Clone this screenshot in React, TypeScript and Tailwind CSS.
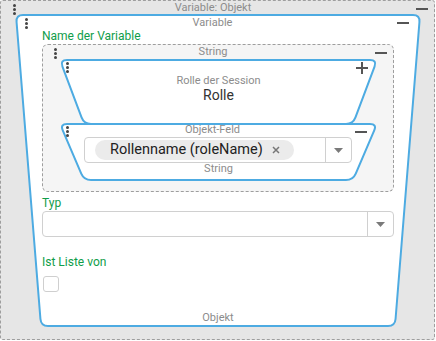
import React from "react";

const blue = "#4dabe2";

type Pt = [number, number];

// rounded polygon path, corners cut by r and bent back through the vertex
function roundedPath(pts: Pt[], r: number) {
  const n = pts.length;
  const toward = (a: Pt, b: Pt, d: number): Pt => {
    const dx = b[0] - a[0];
    const dy = b[1] - a[1];
    const len = Math.hypot(dx, dy);
    return [a[0] + (dx / len) * d, a[1] + (dy / len) * d];
  };
  let d = "";
  pts.forEach((p, i) => {
    const a = toward(p, pts[(i + n - 1) % n], r);
    const b = toward(p, pts[(i + 1) % n], r);
    d += `${i === 0 ? "M" : "L"}${a[0]},${a[1]} Q${p[0]},${p[1]} ${b[0]},${b[1]} `;
  });
  return d + "Z";
}

function Trapezoid({ w, h, inset, r = 7 }: { w: number; h: number; inset: number; r?: number }) {
  const pts: Pt[] = [
    [1, 1],
    [w - 1, 1],
    [w - 1 - inset, h - 1],
    [1 + inset, h - 1],
  ];
  return (
    <svg className="absolute left-0 top-0" width={w} height={h}>
      <path d={roundedPath(pts, r)} fill="#fff" stroke={blue} strokeWidth={2} />
    </svg>
  );
}

function Dots({ className }: { className: string }) {
  return (
    <div className={`absolute flex flex-col gap-[1px] ${className}`}>
      <span className="h-[3px] w-[3px] rounded-full bg-[#444]" />
      <span className="h-[3px] w-[3px] rounded-full bg-[#444]" />
      <span className="h-[3px] w-[3px] rounded-full bg-[#444]" />
    </div>
  );
}

function Minus({ className }: { className: string }) {
  return <span className={`absolute h-[2px] w-[12px] bg-[#555] ${className}`} />;
}

function Plus({ className }: { className: string }) {
  return (
    <div className={`absolute h-[12px] w-[12px] ${className}`}>
      <span className="absolute left-0 top-[5px] h-[2px] w-[12px] bg-[#555]" />
      <span className="absolute left-[5px] top-0 h-[12px] w-[2px] bg-[#555]" />
    </div>
  );
}

function SelectBox({ className, children }: { className: string; children?: React.ReactNode }) {
  return (
    <div className={`relative flex h-[26px] rounded-[4px] border border-[#d0d0d0] bg-white ${className}`}>
      <div className="flex flex-1 items-center">{children}</div>
      <div className="flex w-[26px] items-center justify-center border-l border-[#d0d0d0]">
        <svg width="9" height="5">
          <path d="M0 0H9L4.5 5Z" fill="#7a7a7a" />
        </svg>
      </div>
    </div>
  );
}

function ObjektFeld() {
  return (
    <div className="relative h-[58px]">
      <Trapezoid w={319} h={58} inset={24} />
      <Dots className="left-[7px] top-[2.5px]" />
      <Minus className="right-[11px] top-[8px]" />
      <div className="relative mt-[3px] h-[13px] pr-[12px] text-center text-[11px] leading-[13px] text-[#8c8c8c]">
        Objekt-Feld
      </div>
      <SelectBox className="ml-[25px] mt-[1px] w-[268px]">
        <div className="ml-[10px] flex h-[20px] items-center rounded-full bg-[#ebebeb] pl-[15px] pr-[14px] text-[14.5px] text-[#222]">
          Rollenname (roleName)
          <svg className="ml-[9px]" width="8" height="8">
            <path d="M1 1L7 7M7 1L1 7" stroke="#777" strokeWidth="1.5" />
          </svg>
        </div>
      </SelectBox>
      <div className="relative h-[12px] text-center text-[11px] leading-[12px] text-[#8c8c8c]">String</div>
    </div>
  );
}

function RolleBlock() {
  return (
    <div className="relative ml-[16px] w-[319px]">
      <Trapezoid w={319} h={66} inset={24} />
      <Dots className="left-[7px] top-[2.5px]" />
      <Plus className="right-[10px] top-[3px]" />
      <div className="relative h-[61px] pt-[15px] text-center">
        <div className="text-[11px] leading-[13px] text-[#8c8c8c]">Rolle der Session</div>
        <div className="text-[14px] leading-[16px] text-[#333]">Rolle</div>
      </div>
      <ObjektFeld />
    </div>
  );
}

function StringBox() {
  return (
    <div className="relative ml-[27px] h-[148px] w-[352px] rounded-[6px] border border-dashed border-[#9e9e9e] bg-[#f5f5f5]">
      <Dots className="left-[11px] top-[2.5px]" />
      <Minus className="right-[6px] top-[7px]" />
      <div className="h-[14px] pr-[10px] text-center text-[11px] leading-[14px] text-[#8c8c8c]">String</div>
      <RolleBlock />
    </div>
  );
}

function VariableBlock() {
  return (
    <div className="relative ml-[14px] flex h-[313px] w-[406px] flex-col">
      <Trapezoid w={406} h={313} inset={25} />
      <Dots className="left-[9.5px] top-[3.5px]" />
      <Minus className="right-[12px] top-[8px]" />
      <div className="relative mt-[2px] h-[13px] pr-[11px] text-center text-[11px] leading-[13px] text-[#8c8c8c]">
        Variable
      </div>
      <div className="relative h-[15px] pl-[27px] text-[12px] leading-[15px] text-[#0f9d4a]">Name der Variable</div>
      <StringBox />
      <div className="relative mt-[4px] h-[15px] pl-[27px] text-[12px] leading-[15px] text-[#0f9d4a]">Typ</div>
      <SelectBox className="ml-[27px] w-[352px]" />
      <div className="relative mt-[18px] h-[15px] pl-[27px] text-[12px] leading-[15px] text-[#0f9d4a]">
        Ist Liste von
      </div>
      <div className="relative ml-[28px] mt-[6px] h-[16px] w-[16px] rounded-[3px] border border-[#cfcfcf] bg-white" />
      <div className="relative mb-[3px] mt-auto h-[13px] text-center text-[11px] leading-[13px] text-[#8c8c8c]">
        Objekt
      </div>
    </div>
  );
}

export default function App() {
  return (
    <div className="h-[341px] w-[436px] bg-white font-['Roboto',sans-serif]">
      <div className="relative flex h-[340px] w-[435px] flex-col rounded-[3px] border border-dashed border-[#9e9e9e] bg-[#e6e6e6]">
        <Dots className="left-[11.5px] top-[2.5px]" />
        <Minus className="right-[6px] top-[7px]" />
        <div className="h-[13px] pr-[9px] text-center text-[11px] leading-[13px] text-[#8c8c8c]">Variable: Objekt</div>
        <VariableBlock />
      </div>
    </div>
  );
}
